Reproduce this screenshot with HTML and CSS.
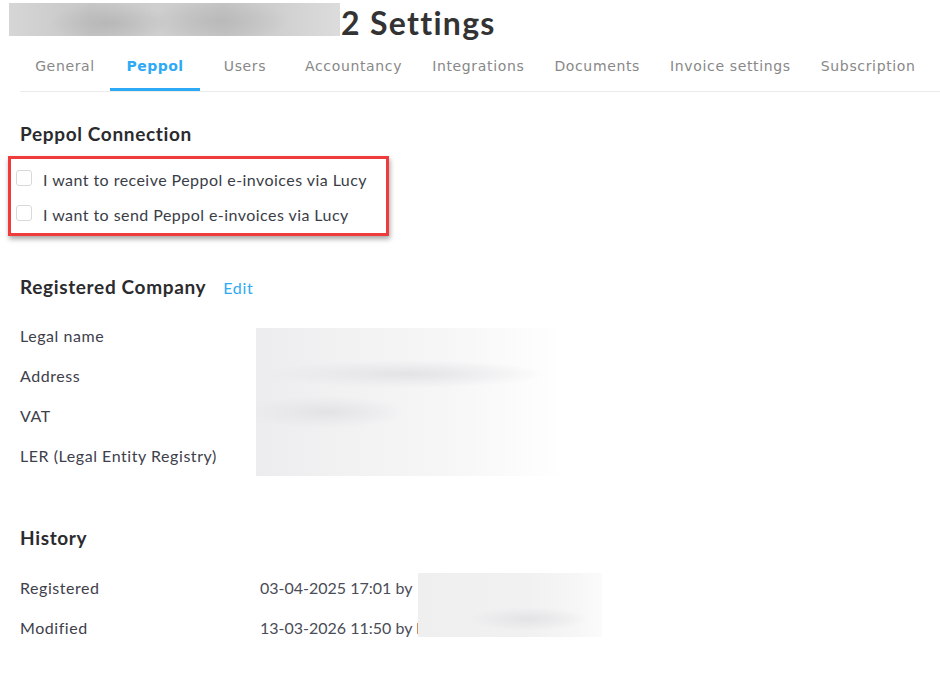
FILE: index.html
```html
<!DOCTYPE html>
<html lang="en">
<head>
<meta charset="utf-8">
<title>Settings</title>
<link rel="stylesheet" href="styles.css">
</head>
<body>
<div class="page">
  <header class="header">
    <div class="redact redact-title"></div>
    <h1 class="title">2 Settings</h1>
  </header>

  <nav class="tabs">
    <a class="tab">General</a>
    <a class="tab active">Peppol</a>
    <a class="tab">Users</a>
    <a class="tab">Accountancy</a>
    <a class="tab">Integrations</a>
    <a class="tab">Documents</a>
    <a class="tab">Invoice settings</a>
    <a class="tab">Subscription</a>
  </nav>

  <main class="content">
    <h2 class="section-title first">Peppol Connection</h2>
    <div class="check-group">
      <label class="check-row"><span class="checkbox"></span><span>I want to receive Peppol e-invoices via Lucy</span></label>
      <label class="check-row"><span class="checkbox"></span><span>I want to send Peppol e-invoices via Lucy</span></label>
      <div class="highlight"></div>
    </div>

    <div class="section-head">
      <h2 class="section-title">Registered Company</h2>
      <a class="edit-link">Edit</a>
    </div>
    <div class="rows company">
      <div class="row"><span class="label">Legal name</span><span class="value"></span></div>
      <div class="row"><span class="label">Address</span><span class="value"></span></div>
      <div class="row"><span class="label">VAT</span><span class="value"></span></div>
      <div class="row"><span class="label">LER (Legal Entity Registry)</span><span class="value"></span></div>
      <div class="redact redact-company"></div>
    </div>

    <h2 class="section-title history-title">History</h2>
    <div class="rows history">
      <div class="row"><span class="label">Registered</span><span class="value">03-04-2025 17:01 by</span></div>
      <div class="row"><span class="label">Modified</span><span class="value">13-03-2026 11:50 by l</span></div>
      <div class="redact redact-history"></div>
    </div>
  </main>
</div>
</body>
</html>
```

FILE: styles.css
```css
* { box-sizing: border-box; }

html, body {
  margin: 0;
  padding: 0;
  background: #ffffff;
}

body {
  font-family: Lato, "Open Sans", "Liberation Sans", sans-serif;
  color: #3a3d47;
  width: 940px;
  height: 685px;
  overflow: hidden;
}

.header {
  height: 39px;
  display: flex;
  align-items: flex-start;
  padding: 3px 0 0 9px;
}

.redact {
  position: absolute;
}

.redact-title {
  position: static;
  width: 331px;
  height: 33px;
  background:
    radial-gradient(ellipse 60px 20px at 100px 20px, rgba(170,170,170,0.55), rgba(170,170,170,0)),
    radial-gradient(ellipse 70px 20px at 210px 18px, rgba(175,175,175,0.5), rgba(175,175,175,0)),
    linear-gradient(to right, #d6d6d6 0%, #c6c6c6 25%, #cfcfcf 45%, #c4c4c4 65%, #d2d2d2 85%, #dcdcdc 100%);
}

.title {
  margin: 3px 0 0 1px;
  font-family: Lato, "Open Sans", sans-serif;
  font-weight: 700;
  font-size: 32px;
  line-height: 33px;
  color: #333333;
  letter-spacing: 1.3px;
}

.tabs {
  display: flex;
  margin: 3px 0 0 20px;
  border-bottom: 1px solid #ebebeb;
}

.tab {
  min-width: 90px;
  height: 49px;
  padding: 1px 15px 0;
  display: flex;
  align-items: center;
  justify-content: center;
  border-bottom: 3px solid transparent;
  font-family: "DejaVu Sans", Verdana, sans-serif;
  font-size: 14px;
  letter-spacing: 0.65px;
  color: #888888;
  white-space: nowrap;
}

.tab.active {
  color: #2ea9f5;
  font-weight: 700;
  letter-spacing: 0.5px;
  border-bottom-color: #2ea9f5;
}

.content {
  padding-left: 20px;
}

.section-title {
  margin: 0;
  font-size: 19px;
  line-height: 24px;
  font-weight: 700;
  letter-spacing: 0.65px;
  color: #2b2b2e;
}

.section-title.first {
  margin-top: 30px;
}

.check-group {
  position: relative;
  margin-top: 16px;
  width: 360px;
}

.check-row {
  height: 35px;
  display: flex;
  align-items: center;
  font-size: 16px;
  letter-spacing: 0.45px;
  color: #3a3d47;
  margin-left: -4px;
}

.checkbox {
  width: 16px;
  height: 16px;
  border: 1px solid #d9d9d9;
  border-radius: 3px;
  background: #fff;
  margin-right: 11px;
  margin-top: -3px;
}

.highlight {
  position: absolute;
  left: -12px;
  top: -6px;
  width: 381px;
  height: 80px;
  border: 3px solid #ef3b3b;
  box-shadow: 1px 3px 5px rgba(0, 0, 0, 0.35);
}

.section-head {
  display: flex;
  align-items: center;
  gap: 17px;
  margin-top: 43px;
}

.edit-link {
  font-size: 16px;
  letter-spacing: 0.7px;
  color: #2ea9f5;
}

.rows {
  position: relative;
}

.rows.company {
  margin-top: 16px;
}

.row {
  height: 40px;
  display: flex;
  align-items: center;
  font-size: 16px;
}

.label {
  width: 240px;
  color: #3e404b;
  letter-spacing: 0.55px;
}

.value {
  color: #4a4c57;
}

.redact-company {
  left: 236px;
  top: 13px;
  width: 310px;
  height: 148px;
  background:
    radial-gradient(ellipse 140px 14px at 150px 46px, rgba(225,225,228,0.9), rgba(225,225,228,0)),
    radial-gradient(ellipse 80px 16px at 70px 84px, rgba(225,225,228,0.9), rgba(225,225,228,0)),
    linear-gradient(to right, #ececee 0%, #f1f1f2 25%, #f6f6f7 60%, rgba(255,255,255,0) 100%);
}

.history-title {
  margin-top: 51px;
}

.rows.history {
  margin-top: 17px;
}

.redact-history {
  left: 398px;
  top: 6px;
  width: 184px;
  height: 64px;
  background:
    radial-gradient(ellipse 60px 12px at 110px 46px, rgba(226,226,228,0.9), rgba(226,226,228,0)),
    linear-gradient(to right, #efeff0 0%, #f1f1f2 60%, #f6f6f6 85%, #fbfbfb 100%);
}
```
